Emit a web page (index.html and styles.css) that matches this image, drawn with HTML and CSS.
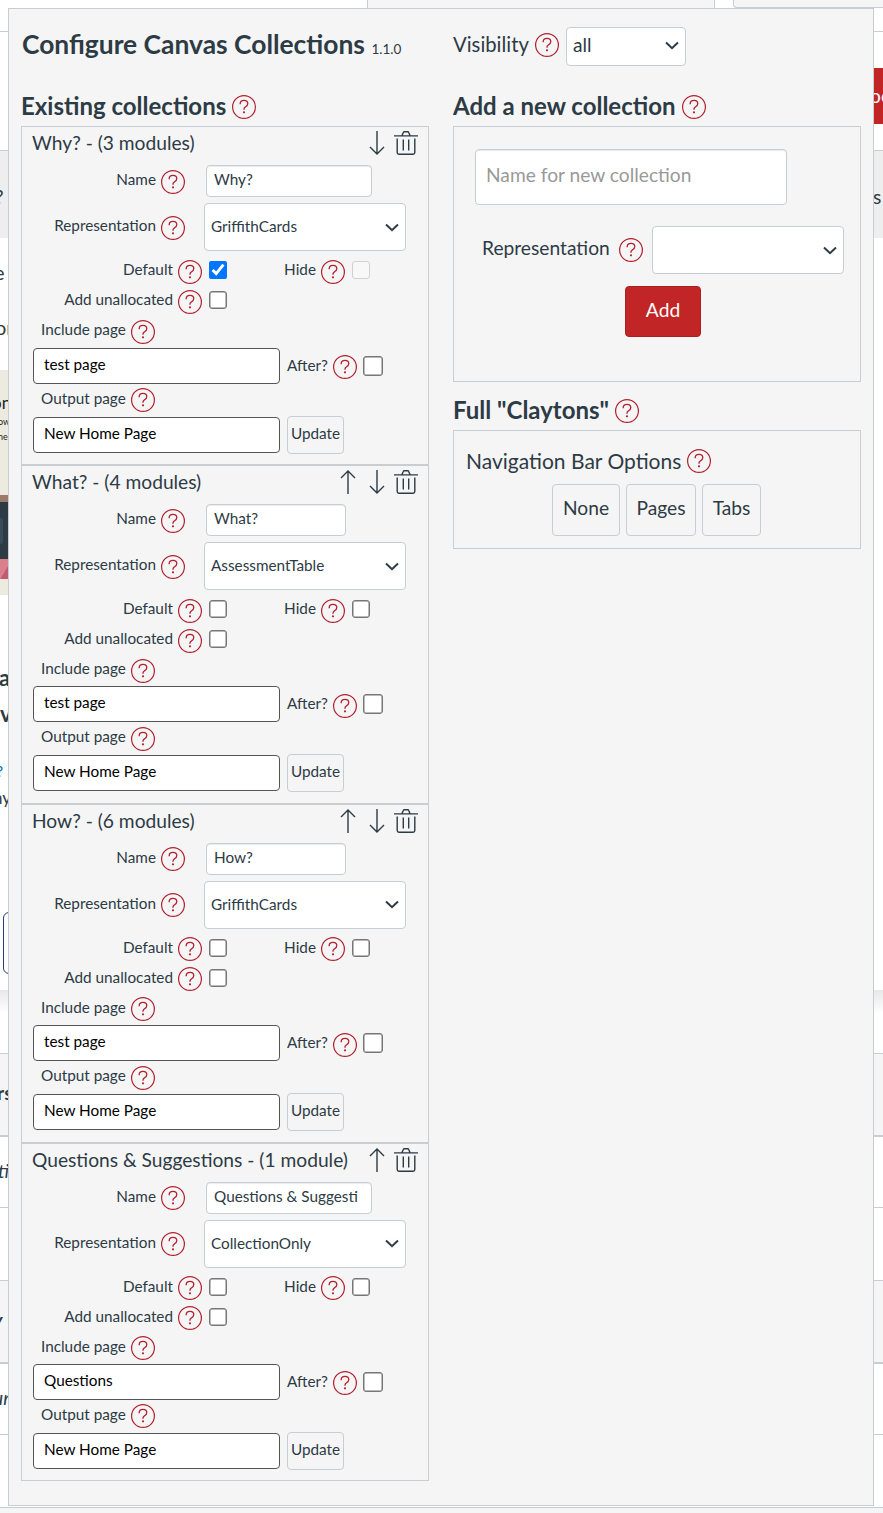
FILE: index.html
```html
<!DOCTYPE html>
<html lang="en">
<head>
<meta charset="utf-8">
<title>Configure Canvas Collections</title>
<link rel="stylesheet" href="styles.css">
</head>
<body>
<svg class="sprite" aria-hidden="true">
  <symbol id="help" viewBox="0 0 24 24"><circle cx="12" cy="12" r="11.4" fill="none" stroke="currentColor" stroke-width="1.2"/><path d="M8.2 9.2V8.6c0-2 1.6-3.3 3.8-3.3s3.8 1.4 3.8 3.3c0 1.7-1.1 2.5-2.2 3.2-1 .7-1.6 1.2-1.6 2.3v.7" fill="none" stroke="currentColor" stroke-width="1.3"/><circle cx="12" cy="17.3" r="1.1" fill="currentColor"/></symbol>
  <symbol id="down" viewBox="0 0 16 24"><path d="M8 0v23M1 16l7 7 7-7" fill="none" stroke="currentColor" stroke-width="1.4"/></symbol>
  <symbol id="up" viewBox="0 0 16 24"><path d="M8 24V1M1 8l7-7 7 7" fill="none" stroke="currentColor" stroke-width="1.4"/></symbol>
  <symbol id="trash" viewBox="0 0 24 24"><path d="M0 4.9h24M8 4.500L9.300 1.400Q9.500 .8 10.200 .8h3.600q.7 0 .9.600L16 4.500M3.200 7.500v14q0 1.700 1.700 1.700h14.200q1.700 0 1.700-1.700v-14M9.300 8.500v11M14.700 8.500v11" fill="none" stroke="currentColor" stroke-width="1.4"/></symbol>
  <symbol id="chev" viewBox="0 0 14 9"><path d="M1 1.500l6 5.700 6-5.700" fill="none" stroke="currentColor" stroke-width="2"/></symbol>
</svg>

<div class="backdrop">
  <div class="tabs"><i class="tab tab-a"></i><i class="tab tab-b"></i></div>
  <div class="band b1"></div>
  <div class="band b2"><span class="red-btn">oo</span></div>
  <div class="band b3"><span class="frag f-q">?</span><span class="frag f-s">s</span></div>
  <div class="band b4"><span class="frag">e</span><span class="frag f-or">or</span></div>
  <div class="band picture"><div class="pic-text"><span class="p1">on</span><span class="p2">ow</span><span class="p2">ne</span></div><i class="brown"></i><i class="navy"></i><i class="pink"></i></div>
  <div class="band b5"><b class="frag f-a">a</b><b class="frag f-v">v</b><span class="frag f-small">?</span><span class="frag f-ny">ny</span><i class="outline"></i></div>
  <div class="band b6"></div>
  <div class="band row-head"><b class="frag f-rs">rs</b></div>
  <div class="band row-a"><em class="frag f-ti">ti</em></div>
  <div class="band row-b"></div>
  <div class="band row-head"><b class="frag f-y"><em>y</em></b></div>
  <div class="band row-a"><em class="frag f-ur">ur</em></div>
  <div class="band row-b"></div>
  <div class="band foot"></div>
</div>

<main class="dialog">
  <section class="col">
    <h1 class="title">Configure Canvas Collections <small>1.1.0</small></h1>
    <h2 class="heading"><span class="h-exist">Existing collections</span><svg class="help"><use href="#help"/></svg></h2>

    <article class="card">
      <header class="card-head"><span class="name">Why? - (3 modules)</span><svg class="arrow"><use href="#down"/></svg><svg class="trash"><use href="#trash"/></svg></header>
      <div class="row name-row"><label class="lab">Name</label><svg class="help"><use href="#help"/></svg><input class="field wide" value="Why?"></div>
      <div class="row rep-row"><label class="lab">Representation</label><svg class="help"><use href="#help"/></svg><div class="select"><span>GriffithCards</span><svg class="chev"><use href="#chev"/></svg></div></div>
      <div class="row check-row first"><label class="lab">Default</label><svg class="help"><use href="#help"/></svg><input class="check on" type="checkbox" checked><label class="lab hide">Hide</label><svg class="help"><use href="#help"/></svg><input class="check" type="checkbox" disabled></div>
      <div class="row check-row"><label class="lab">Add unallocated</label><svg class="help"><use href="#help"/></svg><input class="check" type="checkbox"></div>
      <div class="row page-label"><label>Include page</label><svg class="help"><use href="#help"/></svg></div>
      <div class="row page-row"><input class="page" value="test page"><label class="after">After?</label><svg class="help"><use href="#help"/></svg><input class="check big" type="checkbox"></div>
      <div class="row page-label out"><label>Output page</label><svg class="help"><use href="#help"/></svg></div>
      <div class="row update-row"><input class="page" value="New Home Page"><button class="update">Update</button></div>
    </article>

    <article class="card">
      <header class="card-head"><span class="name">What? - (4 modules)</span><svg class="arrow"><use href="#up"/></svg><svg class="arrow"><use href="#down"/></svg><svg class="trash"><use href="#trash"/></svg></header>
      <div class="row name-row"><label class="lab">Name</label><svg class="help"><use href="#help"/></svg><input class="field" value="What?"></div>
      <div class="row rep-row"><label class="lab">Representation</label><svg class="help"><use href="#help"/></svg><div class="select"><span>AssessmentTable</span><svg class="chev"><use href="#chev"/></svg></div></div>
      <div class="row check-row first"><label class="lab">Default</label><svg class="help"><use href="#help"/></svg><input class="check" type="checkbox"><label class="lab hide">Hide</label><svg class="help"><use href="#help"/></svg><input class="check" type="checkbox"></div>
      <div class="row check-row"><label class="lab">Add unallocated</label><svg class="help"><use href="#help"/></svg><input class="check" type="checkbox"></div>
      <div class="row page-label"><label>Include page</label><svg class="help"><use href="#help"/></svg></div>
      <div class="row page-row"><input class="page" value="test page"><label class="after">After?</label><svg class="help"><use href="#help"/></svg><input class="check big" type="checkbox"></div>
      <div class="row page-label out"><label>Output page</label><svg class="help"><use href="#help"/></svg></div>
      <div class="row update-row"><input class="page" value="New Home Page"><button class="update">Update</button></div>
    </article>

    <article class="card">
      <header class="card-head"><span class="name">How? - (6 modules)</span><svg class="arrow"><use href="#up"/></svg><svg class="arrow"><use href="#down"/></svg><svg class="trash"><use href="#trash"/></svg></header>
      <div class="row name-row"><label class="lab">Name</label><svg class="help"><use href="#help"/></svg><input class="field" value="How?"></div>
      <div class="row rep-row"><label class="lab">Representation</label><svg class="help"><use href="#help"/></svg><div class="select"><span>GriffithCards</span><svg class="chev"><use href="#chev"/></svg></div></div>
      <div class="row check-row first"><label class="lab">Default</label><svg class="help"><use href="#help"/></svg><input class="check" type="checkbox"><label class="lab hide">Hide</label><svg class="help"><use href="#help"/></svg><input class="check" type="checkbox"></div>
      <div class="row check-row"><label class="lab">Add unallocated</label><svg class="help"><use href="#help"/></svg><input class="check" type="checkbox"></div>
      <div class="row page-label"><label>Include page</label><svg class="help"><use href="#help"/></svg></div>
      <div class="row page-row"><input class="page" value="test page"><label class="after">After?</label><svg class="help"><use href="#help"/></svg><input class="check big" type="checkbox"></div>
      <div class="row page-label out"><label>Output page</label><svg class="help"><use href="#help"/></svg></div>
      <div class="row update-row"><input class="page" value="New Home Page"><button class="update">Update</button></div>
    </article>

    <article class="card">
      <header class="card-head"><span class="name">Questions &amp; Suggestions - (1 module)</span><svg class="arrow"><use href="#up"/></svg><svg class="trash"><use href="#trash"/></svg></header>
      <div class="row name-row"><label class="lab">Name</label><svg class="help"><use href="#help"/></svg><input class="field wide" value="Questions &amp; Suggesti"></div>
      <div class="row rep-row"><label class="lab">Representation</label><svg class="help"><use href="#help"/></svg><div class="select"><span>CollectionOnly</span><svg class="chev"><use href="#chev"/></svg></div></div>
      <div class="row check-row first"><label class="lab">Default</label><svg class="help"><use href="#help"/></svg><input class="check" type="checkbox"><label class="lab hide">Hide</label><svg class="help"><use href="#help"/></svg><input class="check" type="checkbox"></div>
      <div class="row check-row"><label class="lab">Add unallocated</label><svg class="help"><use href="#help"/></svg><input class="check" type="checkbox"></div>
      <div class="row page-label"><label>Include page</label><svg class="help"><use href="#help"/></svg></div>
      <div class="row page-row"><input class="page" value="Questions"><label class="after">After?</label><svg class="help"><use href="#help"/></svg><input class="check big" type="checkbox"></div>
      <div class="row page-label out"><label>Output page</label><svg class="help"><use href="#help"/></svg></div>
      <div class="row update-row"><input class="page" value="New Home Page"><button class="update">Update</button></div>
    </article>
  </section>

  <section class="col">
    <div class="visibility"><label>Visibility</label><svg class="help"><use href="#help"/></svg><div class="select vis"><span>all</span><svg class="chev"><use href="#chev"/></svg></div></div>
    <h2 class="heading"><span class="h-add">Add a new collection</span><svg class="help"><use href="#help"/></svg></h2>
    <div class="box add-box">
      <input class="new-name" placeholder="Name for new collection">
      <div class="new-rep"><label>Representation</label><svg class="help"><use href="#help"/></svg><div class="select new-select"><span></span><svg class="chev"><use href="#chev"/></svg></div></div>
      <button class="add">Add</button>
    </div>
    <h2 class="heading full"><span class="h-full">Full "Claytons"</span><svg class="help"><use href="#help"/></svg></h2>
    <div class="box nav-box">
      <div class="nav-title"><span>Navigation Bar Options</span><svg class="help"><use href="#help"/></svg></div>
      <div class="nav-buttons"><button class="n1">None</button><button class="n2">Pages</button><button class="n3">Tabs</button></div>
    </div>
  </section>
</main>
</body>
</html>
```
FILE: styles.css
```css
* { box-sizing: border-box; }
body { margin: 0; position: relative; width: 883px; height: 1513px; overflow: hidden; background: #fff; color: #2d3b45; font-family: Lato, sans-serif; font-size: 19.2px; }
.sprite { position: absolute; width: 0; height: 0; }
button, input { font-family: inherit; color: inherit; margin: 0; }

/* page visible around the dialog */
.backdrop { display: flex; flex-direction: column; height: 1513px; }
.tabs { display: flex; gap: 18px; height: 8px; padding-left: 367px; }
.tab { height: 8px; background: #f5f5f5; border: solid #c7cdd1; border-width: 0 1px; }
.tab-a { width: 348px; }
.tab-b { flex: 1; border-right: 0; border-bottom: 1px solid #c7cdd1; border-bottom-left-radius: 4px; }
.band { flex: none; overflow: hidden; border-bottom: 1px solid #c7cdd1; }
.b1 { height: 24px; }
.b2 { height: 119px; padding: 36px 0 0 863px; }
.red-btn { display: block; height: 56px; padding: 16px 0 0 7px; background: #c12525; color: #fff; line-height: 24px; }
.b3 { height: 87px; display: flex; justify-content: space-between; background: #eee; border: 0; line-height: 24px; padding-top: 34px; }
.f-q { margin-left: -5px; }
.f-s { width: 10px; }
.b4 { height: 132px; border: 0; padding-top: 22px; line-height: 24px; display: flex; flex-direction: column; }
.b4 .frag { margin-left: -6px; font-size: 20px; }
.b4 .f-or { margin: 31px 0 0 -5px; }
.picture { height: 225px; border: 0; background: #edebe0; width: 10px; }
.pic-text { height: 125px; padding-top: 22px; color: #222; display: flex; flex-direction: column; }
.p1 { font-size: 17px; line-height: 22px; margin-left: -8px; }
.p2 { font-size: 9px; line-height: 15px; margin-left: -2px; }
.brown { display: block; height: 7px; background: #9c7b68; }
.navy { display: block; height: 57px; background: #2d3b45; padding-top: 16px; }
.navy::before { content: ""; display: block; width: 3px; height: 26px; background: #394b58; border-radius: 0 2px 2px 0; }
.pink { display: block; height: 20px; background: linear-gradient(120deg, #dc7f8c 55%, #c25c73 56%); }
.b5 { height: 395px; border: 0; padding-top: 70px; display: flex; flex-direction: column; line-height: 26px; }
.f-a { margin-left: -1px; font-size: 22px; }
.f-v { margin: 10px 0 0 0; font-size: 22px; }
.f-small { margin: 31px 0 0 -4px; font-size: 16px; color: #0374b5; }
.f-ny { margin: 1px 0 0 -7px; font-size: 17px; }
.outline { width: 30px; height: 62px; margin: 101px 0 0 3px; border: 1px solid #293b83; border-radius: 6px; }
.b6 { height: 64px; background: linear-gradient(#e8e8e8, #fff 24px); }
.row-head { height: 83px; background: #f5f5f5; border-bottom-width: 2px; line-height: 24px; padding-top: 27px; }
.row-a { height: 71px; line-height: 24px; padding-top: 22px; }
.row-b { height: 73px; }
.frag { display: block; white-space: nowrap; }
.f-rs { margin-left: -3px; }
.f-ti { margin-left: -2px; }
.f-y { margin-left: -7px; }
.f-ur { margin-left: -7px; }
.foot { height: 7px; background: #f5f5f5; border: 0; }

/* dialog */
.dialog { position: absolute; left: 8px; top: 8px; width: 866px; height: 1498px; display: flex; gap: 24px; padding: 0 12px; background: #f5f5f5; border: 1px solid #c7cdd1; }
.col { width: 408px; }
.help { width: 24px; height: 24px; flex: none; color: #b3202f; }
.title { margin: 0; height: 76px; padding: 17px 0 0 1px; font-size: 26.4px; line-height: 36px; font-weight: 700; white-space: nowrap; }
.title small { font-size: 13.5px; font-weight: 400; }
.heading { margin: 0; height: 41.45px; display: flex; align-items: center; gap: 6px; font-size: 24px; font-weight: 700; line-height: 30px; white-space: nowrap; }
.heading .help { margin-top: 3px; }
.card { height: 338.7px; border: 1px solid #c7cdd1; font-size: 15.3px; }
.card-head { display: flex; align-items: center; height: 32px; padding: 0 10px 0 10px; font-size: 19.2px; line-height: 24px; white-space: nowrap; }
.card-head .name { flex: 1; }
.arrow { width: 16px; height: 24px; margin-right: 13px; }
.arrow:nth-last-child(2) { margin-right: 9px; }
.trash { width: 24px; height: 24px; }
.row { display: flex; align-items: center; line-height: 20px; white-space: nowrap; }
.row .help { margin: 3px 0 0 5px; }
.lab { text-align: right; }
.name-row { height: 44px; }
.name-row .lab, .rep-row .lab { width: 134px; margin-top: -4px; }
.name-row .help, .rep-row .help { margin-top: 1px; }
.check-row .lab { margin-top: -2px; }
.field { width: 140px; height: 32px; margin-left: 21px; padding: 0 7px 4px; border: 1px solid #c7cdd1; border-radius: 4px; background: #fff; font-size: 15.3px; box-shadow: inset 0 1px 1px rgba(0,0,0,.08); }
.wide { width: 166px; }
.rep-row { height: 48px; }
.select { display: flex; align-items: center; justify-content: space-between; width: 202px; height: 48px; margin-left: 19px; padding: 0 6px; border: 1px solid #c7cdd1; border-radius: 4px; background: #fff; }
.select span { margin-top: -2px; }
.chev { width: 14px; height: 9px; flex: none; }
.check-row { height: 30px; }
.first { margin-top: 4px; }
.check-row .lab { width: 151px; }
.check-row .lab.hide { width: 89px; }
.check { width: 18px; height: 18px; margin-left: 7px; flex: none; }
.check:not(.on) { appearance: none; border: 1px solid #767676; border-radius: 3px; background: #fff; box-shadow: inset 0 0 0 .5px #767676; }
.check:disabled { border-color: #d1d1d1; background: #f8f8f8; box-shadow: none; }
.page-label { height: 30px; padding-left: 19px; }
.page-label label { margin-top: -2px; }
.page-row { height: 36px; margin-top: 2.35px; padding-left: 11px; }
.page { width: 247px; height: 36px; padding: 0 10px 4px; border: 1px solid #555; border-radius: 4px; background: #fff; color: #000; font-size: 15.3px; }
.after { margin: -2px 0 0 7px; }
.check.big { width: 20px; height: 20px; margin-left: 6px; }
.update-row { height: 38px; margin-top: 2px; padding-left: 11px; }
.update { width: 57px; height: 38px; margin-left: 7px; padding: 0 0 4px; border: 1px solid #c7cdd1; border-radius: 4px; background: #f5f5f5; font-size: 15.3px; }

.visibility { display: flex; align-items: center; height: 76px; padding-bottom: 4px; }
.visibility label { width: 76px; margin-top: -2px; font-size: 20.3px; }
.visibility .help { margin-left: 6px; }
.vis { width: 120px; height: 39px; margin: 2px 0 0 7px; padding-bottom: 2px; }
.box { border: 1px solid #c7cdd1; }
.add-box { height: 256px; display: flex; flex-direction: column; align-items: flex-start; padding: 22px 0 0 21px; }
.new-name { width: 312px; height: 56px; padding: 0 10px 6px; border: 1px solid #c7cdd1; border-radius: 4px; font-size: 19.2px; background: #fff; box-shadow: inset 0 1px 1px rgba(0,0,0,.08); }
.new-name::placeholder { color: #999; }
.new-rep { display: flex; align-items: center; height: 48px; margin: 21px 0 0 7px; }
.new-rep .help { margin-left: 9px; }
.new-rep label { width: 128px; margin-top: -5px; }
.new-select { width: 192px; margin-left: 9px; }
.add { width: 76px; height: 51px; margin: 12px 0 0 150px; padding: 0 0 5px; border: 1px solid #a82020; border-radius: 4px; background: #c12525; color: #fff; font-size: 19.2px; }
.full { height: 48px; padding-top: 7px; }
.nav-box { height: 119px; padding: 13px 0 0 12px; }
.nav-title { display: flex; align-items: center; height: 32px; gap: 6px; font-size: 21px; white-space: nowrap; }
.nav-title .help { margin-top: 1px; }
.nav-buttons { display: flex; gap: 6px; margin: 8px 0 0 86px; }
.nav-buttons button { height: 52px; padding: 0 0 6px; border: 1px solid #c7cdd1; border-radius: 4px; background: #f5f5f5; font-size: 19.2px; }
.n1 { width: 68px; }
.n2 { width: 70px; }
.n3 { width: 59px; }
```
